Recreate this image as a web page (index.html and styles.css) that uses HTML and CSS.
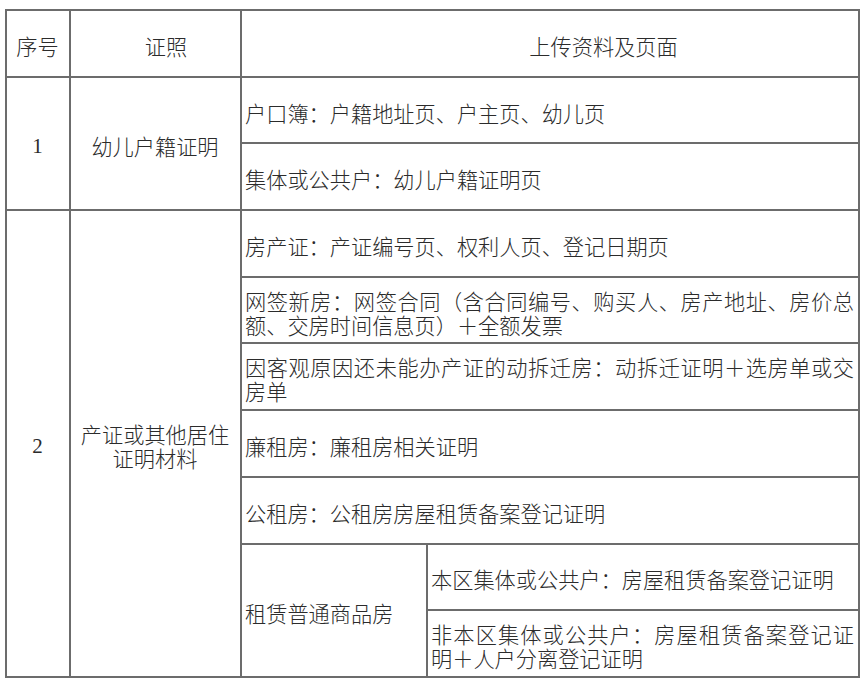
FILE: index.html
```html
<!DOCTYPE html>
<html lang="zh-CN">
<head>
<meta charset="utf-8">
<title>证照上传资料</title>
<link rel="stylesheet" href="styles.css">
</head>
<body>
<table class="docs">
  <colgroup>
    <col class="c-no">
    <col class="c-name">
    <col class="c-sub">
    <col class="c-rest">
  </colgroup>
  <tr>
    <th class="center">序号</th>
    <th class="center head-name">证照</th>
    <th colspan="2" class="center head-upload">上传资料及页面</th>
  </tr>
  <tr>
    <td rowspan="2" class="center num">1</td>
    <td rowspan="2" class="center">幼儿户籍证明</td>
    <td colspan="2">户口簿：户籍地址页、户主页、幼儿页</td>
  </tr>
  <tr>
    <td colspan="2">集体或公共户：幼儿户籍证明页</td>
  </tr>
  <tr>
    <td rowspan="8" class="center num">2</td>
    <td rowspan="8" class="center">产证或其他居住证明材料</td>
    <td colspan="2">房产证：产证编号页、权利人页、登记日期页</td>
  </tr>
  <tr>
    <td colspan="2">网签新房：网签合同（含合同编号、购买人、房产地址、房价总额、交房时间信息页）＋全额发票</td>
  </tr>
  <tr>
    <td colspan="2">因客观原因还未能办产证的动拆迁房：动拆迁证明＋选房单或交房单</td>
  </tr>
  <tr>
    <td colspan="2">廉租房：廉租房相关证明</td>
  </tr>
  <tr>
    <td colspan="2">公租房：公租房房屋租赁备案登记证明</td>
  </tr>
  <tr>
    <td rowspan="2">租赁普通商品房</td>
    <td>本区集体或公共户：房屋租赁备案登记证明</td>
  </tr>
  <tr>
    <td>非本区集体或公共户：房屋租赁备案登记证明＋人户分离登记证明</td>
  </tr>
</table>
</body>
</html>
```

FILE: styles.css
```css
html, body {
  margin: 0;
  padding: 0;
  background: #ffffff;
}

body {
  padding: 9px 0 0 5px;
}

.docs {
  border-collapse: collapse;
  table-layout: fixed;
  width: 853px;
  font-family: "Noto Sans CJK SC", "Noto Sans CJK JP", sans-serif;
  font-weight: 300;
  font-size: 21.2px;
  line-height: 24px;
  color: #2b2b2b;
  text-spacing-trim: space-all;
  font-feature-settings: "fwid" 1;
}

.c-no { width: 64px; }
.c-name { width: 171px; }
.c-sub { width: 186px; }
.c-rest { width: 432px; }

.docs tr {
  height: 66.7px;
}

.docs th,
.docs td {
  border: 2px solid #6c6c6c;
  padding: 5px 4px 0 3px;
  vertical-align: middle;
  text-align: justify;
  font-weight: 300;
}

.docs .center {
  text-align: center;
}

.docs .num {
  font-family: "Liberation Serif", serif;
  font-size: 21px;
  font-feature-settings: normal;
}

.docs .head-name {
  padding-left: 25px;
}

.docs .head-upload {
  padding-left: 111px;
}
```
